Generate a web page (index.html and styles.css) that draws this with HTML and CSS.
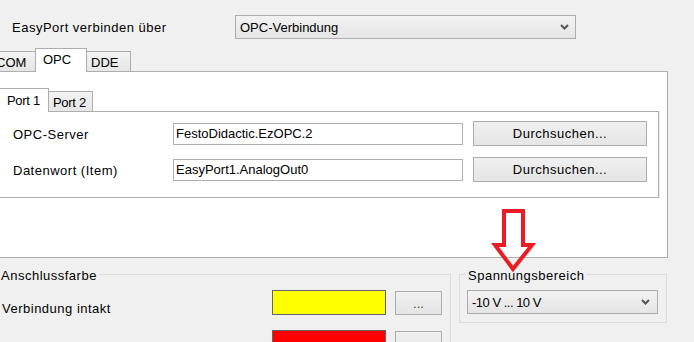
FILE: index.html
```html
<!DOCTYPE html>
<html lang="de">
<head>
    <meta charset="UTF-8">
    <meta name="viewport" content="width=device-width, initial-scale=1.0">
    <title>EasyPort Verbindung</title>
    <link rel="stylesheet" href="styles.css">
</head>
<body>

<div class="window">
    <div class="conn-row">
        <span class="label conn-label">EasyPort verbinden über</span>
        <div class="combo conn-combo">
            <span>OPC-Verbindung</span>
            <svg class="chevron" width="9" height="6" viewBox="0 0 9 6"><path d="M1 1 L4.5 4.5 L8 1" fill="none" stroke="#555" stroke-width="2"/></svg>
        </div>
    </div>

    <div class="tabs">
        <div class="tab tab-com">COM</div>
        <div class="tab tab-active">OPC</div>
        <div class="tab tab-dde">DDE</div>
    </div>

    <div class="tab-page">
        <div class="subtabs">
            <div class="subtab subtab-active">Port 1</div>
            <div class="subtab subtab-2">Port 2</div>
        </div>
        <div class="sub-page">
            <div class="field-row">
                <span class="label field-label">OPC-Server</span>
                <div class="textbox">FestoDidactic.EzOPC.2</div>
                <button class="btn browse">Durchsuchen...</button>
            </div>
            <div class="field-row">
                <span class="label field-label">Datenwort (Item)</span>
                <div class="textbox">EasyPort1.AnalogOut0</div>
                <button class="btn browse">Durchsuchen...</button>
            </div>
        </div>
    </div>

    <div class="bottom">
        <div class="group group-color">
            <div class="label group-title">Anschlussfarbe</div>
            <div class="color-row">
                <span class="label color-label">Verbindung intakt</span>
                <div class="swatch swatch-yellow"></div>
                <button class="btn dots">...</button>
            </div>
            <div class="color-row">
                <span class="label color-label">Keine Verbindung</span>
                <div class="swatch swatch-red"></div>
                <button class="btn dots">...</button>
            </div>
        </div>
        <div class="group group-range">
            <div class="label group-title">Spannungsbereich</div>
            <div class="combo range-combo">
                <span class="range-text">-10 V ... 10 V</span>
                <svg class="chevron" width="9" height="6" viewBox="0 0 9 6"><path d="M1 1 L4.5 4.5 L8 1" fill="none" stroke="#555" stroke-width="2"/></svg>
            </div>
        </div>
    </div>

    <!-- red hint arrow drawn over the dialog -->
    <svg class="arrow" width="52" height="72" viewBox="0 0 52 72">
        <path d="M16 6 L35 6 L35 40 L44 40 L25 64 L7 40 L16 40 Z" fill="none" stroke="#ed1c24" stroke-width="4" stroke-linejoin="miter"/>
    </svg>
</div>

</body>
</html>
```

FILE: styles.css
```css
* {
    box-sizing: border-box;
}
body {
    margin: 0;
    background-color: #f0f0f0;
    font-family: "Liberation Sans", Arial, sans-serif;
    font-size: 13px;
    color: #000;
}
.window {
    position: relative;
    width: 694px;
    height: 342px;
    overflow: hidden;
}
.label {
    letter-spacing: 0.5px;
    white-space: nowrap;
}

/* top combo row */
.conn-row {
    display: flex;
    align-items: center;
    padding: 15px 0 0 12px;
    height: 39px;
}
.conn-label {
    width: 223px;
}
.combo {
    display: flex;
    align-items: center;
    justify-content: space-between;
    height: 24px;
    border: 1px solid #acacac;
    background: linear-gradient(#f2f2f2, #e5e5e5);
    padding: 0 6px 0 4px;
}
.conn-combo {
    width: 341px;
}

/* main tabs */
.tabs {
    display: flex;
    align-items: flex-end;
    height: 23px;
    margin: 9px 0 0 -11px;
}
.tab {
    height: 20px;
    line-height: 18px;
    padding-top: 2px;
    border: 1px solid #adadad;
    border-bottom: none;
    background: linear-gradient(#f3f3f3, #e6e6e6);
}
.tab-com {
    width: 46px;
    padding-left: 6px;
    border-right: none;
}
.tab-active {
    width: 52px;
    height: 24px;
    margin-bottom: -1px;
    padding: 2px 0 0 7px;
    background: #fff;
    position: relative;
    z-index: 1;
}
.tab-dde {
    width: 44px;
    padding-left: 4px;
    border-left: none;
}
.tab-page {
    margin-left: -10px;
    width: 678px;
    height: 187px;
    border: 1px solid #adadad;
    background: #fff;
    padding-top: 16px;
}

/* port tabs */
.subtabs {
    display: flex;
    align-items: flex-end;
    height: 23px;
    margin-left: 7px;
}
.subtab {
    height: 20px;
    line-height: 18px;
    padding-top: 2px;
    border: 1px solid #adadad;
    border-bottom: none;
    background: linear-gradient(#f3f3f3, #e6e6e6);
    letter-spacing: -0.3px;
}
.subtab-active {
    width: 51px;
    height: 24px;
    margin-bottom: -1px;
    padding: 3px 0 0 8px;
    background: #fff;
    position: relative;
    z-index: 1;
}
.subtab-2 {
    width: 44px;
    padding-left: 4px;
    border-left: none;
}
.sub-page {
    margin-left: 7px;
    width: 661px;
    height: 87px;
    border: 1px solid #adadad;
    box-shadow: 1px 0 0 #ececec;
    padding-top: 9px;
}
.field-row {
    display: flex;
    align-items: center;
    height: 25px;
    padding-left: 14px;
    margin-bottom: 11px;
}
.field-label {
    width: 160px;
    padding-top: 2px;
}
.textbox {
    width: 290px;
    height: 22px;
    line-height: 20px;
    border: 1px solid #abadb3;
    background: #fff;
    padding-left: 2px;
}

/* buttons */
.btn {
    font-family: "Liberation Sans", Arial, sans-serif;
    font-size: 13px;
    color: #000;
    border: 1px solid #acacac;
    background: linear-gradient(#f0f0f0, #e5e5e5);
    padding: 0;
    letter-spacing: 0.5px;
}
.browse {
    width: 174px;
    height: 25px;
    margin-left: 10px;
}
.dots {
    width: 47px;
    height: 24px;
    margin: 1px 0 0 9px;
    color: #5a3c1e;
    letter-spacing: 0;
}

/* group boxes */
.bottom {
    display: flex;
    margin: 16px 0 0 -10px;
}
.group {
    border: 1px solid #dcdcdc;
}
.group-title {
    width: max-content;
    line-height: 16px;
    margin-top: -7px;
    padding: 0 2px;
    background: #f0f0f0;
}
.group-color {
    width: 461px;
    height: 100px;
}
.group-color .group-title {
    margin-left: 8px;
}
.color-row {
    display: flex;
    align-items: flex-start;
    margin-top: 6px;
}
.color-row + .color-row {
    margin-top: 9px;
}
.color-label {
    width: 281px;
    padding: 6px 0 0 11px;
    line-height: 25px;
}
.swatch {
    width: 114px;
    height: 25px;
    border: 1px solid #646464;
}
.swatch-yellow {
    background: #ffff00;
}
.swatch-red {
    background: #ff0000;
}
.group-range {
    width: 208px;
    height: 49px;
    margin-left: 8px;
}
.group-range .group-title {
    margin-left: 6px;
}
.range-combo {
    width: 191px;
    margin: 6px 0 0 7px;
    padding-right: 7px;
}
.range-text {
    letter-spacing: -0.5px;
}

.arrow {
    position: absolute;
    left: 488px;
    top: 205px;
}
```
